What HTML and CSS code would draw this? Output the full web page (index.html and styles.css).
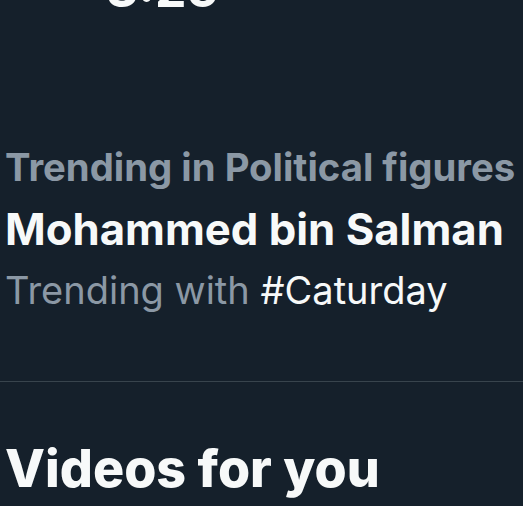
FILE: index.html
```html
<!DOCTYPE html>
<html>
<head>
<meta charset="utf-8">
<link rel="stylesheet" href="styles.css">
</head>
<body>
<div class="screen">
  <div class="status"><span class="time">3:25</span></div>
  <div class="trend">
    <div class="trend-context">Trending in Political figures</div>
    <div class="trend-name">Mohammed bin Salman</div>
    <div class="trend-meta">Trending with <span class="hashtag">#Caturday</span></div>
  </div>
  <div class="divider"></div>
  <h2 class="section-title">Videos for you</h2>
</div>
</body>
</html>
```
FILE: styles.css
```css
html, body {
  margin: 0;
  padding: 0;
  background: #15202b;
}
body {
  font-family: Inter, "Noto Sans", sans-serif;
  color: #f7f9f9;
  overflow: hidden;
}
.screen {
  width: 523px;
  height: 506px;
  overflow: hidden;
}
.status {
  height: 12px;
  display: flex;
  align-items: flex-end;
  padding-left: 106px;
}
.time {
  font-size: 50px;
  font-weight: 700;
  line-height: 1;
  margin-bottom: -2px;
}
.trend {
  padding: 124px 5px 0;
}
.trend-context {
  font-size: 38.3px;
  font-weight: 700;
  color: #8b98a5;
  line-height: 62px;
}
.trend-name {
  font-size: 43.7px;
  font-weight: 700;
  line-height: 64px;
}
.trend-meta {
  font-size: 38px;
  color: #8b98a5;
  line-height: 56px;
}
.hashtag {
  color: #f7f9f9;
}
.divider {
  height: 1px;
  background: #38444d;
  margin-top: 63px;
}
.section-title {
  margin: 0;
  padding: 56px 5px 0;
  font-size: 52px;
  font-weight: 800;
  line-height: 1.2;
}
```
